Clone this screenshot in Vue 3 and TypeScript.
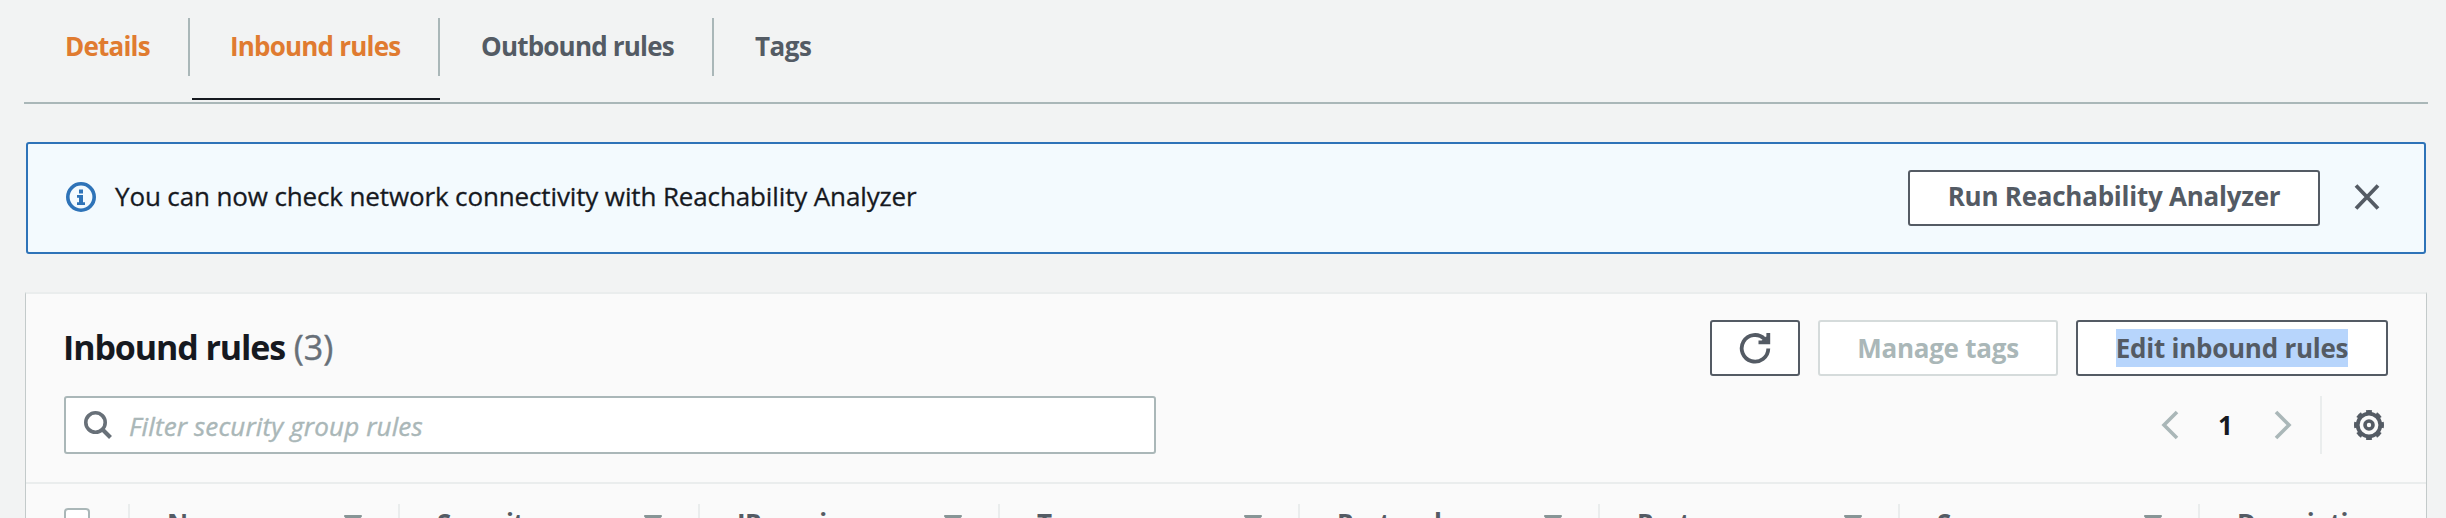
<script setup lang="ts">
import { ref } from 'vue'

interface Tab {
  label: string
  visited: boolean
  kind: string
}

const tabs: Tab[] = [
  { label: 'Details', visited: true, kind: 'tab-details' },
  { label: 'Inbound rules', visited: true, kind: 'tab-inbound' },
  { label: 'Outbound rules', visited: false, kind: 'tab-outbound' },
  { label: 'Tags', visited: false, kind: 'tab-tags' },
]

const activeTab = ref('Inbound rules')
const filter = ref('')
const alertOpen = ref(true)
const columns = ['Name', 'Security group rule ID', 'IP version', 'Type', 'Protocol', 'Port range', 'Source', 'Description - optional']
</script>

<template>
  <main class="page">
    <nav class="tabs">
      <a
        v-for="tab in tabs"
        :key="tab.label"
        class="tab"
        :class="[tab.kind, { visited: tab.visited, active: tab.label === activeTab }]"
        @click="activeTab = tab.label"
      ><span class="tab-label">{{ tab.label }}</span></a>
    </nav>

    <section v-if="alertOpen" class="alert">
      <svg class="info" viewBox="0 0 30 30">
        <circle cx="15" cy="15" r="13.2" fill="none" stroke="#2e73b8" stroke-width="3.6" />
        <path d="M13 7.4h4v4h-4zM11 13h6v7.200h2V23h-8v-2.800h2v-4.400h-2z" fill="#2e73b8" />
      </svg>
      <p class="message">You can now check network connectivity with Reachability Analyzer</p>
      <button class="btn btn-run"><span>Run Reachability Analyzer</span></button>
      <button class="close" aria-label="Close" @click="alertOpen = false">
        <svg width="26" height="26" viewBox="0 0 26 26"><path d="M2 1.500L24 24.500M24 1.500L2 24.500" stroke="#545b64" stroke-width="3.800" /></svg>
      </button>
    </section>

    <section class="panel">
      <header class="panel-head">
        <h2>Inbound rules <span class="count">(3)</span></h2>
        <div class="actions">
          <button class="btn btn-refresh" aria-label="Refresh">
            <svg width="32" height="32" viewBox="0 0 32 32" fill="none" stroke="#545b64" stroke-width="3.800">
              <path d="M29.300 16.500A13.300 13.300 0 1 1 25.500 7" />
              <path d="M29.300 1V10.300H19.500" />
              <path d="M24 10L28.500 5.500" />
            </svg>
          </button>
          <button class="btn btn-tags" disabled><span>Manage tags</span></button>
          <button class="btn btn-edit"><span class="selected">Edit inbound rules</span></button>
        </div>
      </header>

      <div class="tools">
        <label class="search">
          <svg width="28" height="28" viewBox="0 0 28 28" fill="none" stroke="#687078">
            <circle cx="11.500" cy="11.500" r="9.700" stroke-width="3.600" />
            <path d="M18.500 18.500L26.500 26.500" stroke-width="4" />
          </svg>
          <input v-model="filter" placeholder="Filter security group rules" />
        </label>
        <div class="pager">
          <svg width="18" height="30" viewBox="0 0 18 30"><path d="M16 2L3 15L16 28" fill="none" stroke="#aab7b8" stroke-width="3.600" /></svg>
          <b>1</b>
          <svg width="18" height="30" viewBox="0 0 18 30"><path d="M2 2L15 15L2 28" fill="none" stroke="#aab7b8" stroke-width="3.600" /></svg>
        </div>
        <div class="settings">
          <svg width="32" height="32" viewBox="0 0 32 32" fill="none" stroke="#545b64">
            <circle cx="16" cy="16" r="11.300" stroke-width="3.800" />
            <circle cx="16" cy="16" r="13.500" stroke-width="3" pathLength="16" stroke-dasharray="1.100 0.900" stroke-dashoffset="0.550" />
            <circle cx="16" cy="16" r="4" stroke-width="3.600" />
          </svg>
        </div>
      </div>

      <div class="thead">
        <div class="th-check"><span class="checkbox"></span></div>
        <div v-for="(name, i) in columns" :key="name" class="th">
          <span class="th-label">{{ name }}</span>
          <svg v-if="i < columns.length - 1" class="caret" width="18" height="12" viewBox="0 0 18 12"><path d="M1 1h16L9 10z" fill="#879596" stroke="#879596" stroke-width="2" stroke-linejoin="round" /></svg>
        </div>
      </div>
    </section>
  </main>
</template>

<style>
body {
  background: #f2f3f3;
  overflow: hidden;
}
</style>

<style scoped>
.page {
  box-sizing: border-box;
  width: 2446px;
  height: 518px;
  padding: 0 20px 0 24px;
  overflow: hidden;
  background: #f2f3f3;
  color: #16191f;
  font: 26px/38px "Open Sans", "Noto Sans", sans-serif;
}
.page * { box-sizing: border-box; }
.tabs {
  display: flex;
  align-items: flex-start;
  height: 104px;
  width: 2404px;
  padding-top: 18px;
  border-bottom: 2px solid #aab7b8;
}
.tab {
  display: flex;
  height: 82px;
  color: #545b64;
  font-weight: 700;
  letter-spacing: -0.8px;
  white-space: nowrap;
}
.tab-label {
  height: 58px;
  width: 100%;
  padding: 9px 0 0 41px;
  border-right: 2px solid #aab7b8;
}
.tab.visited { color: #e07b30; }
.tab.active { border-bottom: 2px solid #16191f; }
.tab-details { width: 168px; padding-right: 2px; }
.tab-inbound { width: 248px; }
.tab-inbound .tab-label { padding-left: 38px; }
.tab-outbound { width: 274px; }
.tab-tags { width: 150px; letter-spacing: -0.5px; }
.tab-tags .tab-label { border-right: 0; }

.alert {
  display: flex;
  align-items: center;
  width: 2400px;
  height: 112px;
  margin: 38px 0 0 2px;
  padding: 0 44px 0 38px;
  border: 2px solid #2e73b8;
  border-radius: 3px;
  background: #f3fafe;
}
.info { width: 30px; height: 30px; margin-top: -2px; }
.message {
  flex: 1;
  margin: -4px 0 0 19px;
  letter-spacing: -0.13px;
  -webkit-text-stroke: 0.3px currentColor;
  white-space: nowrap;
}
.btn {
  display: flex;
  align-items: center;
  justify-content: center;
  height: 56px;
  padding: 0;
  border: 2px solid #545b64;
  border-radius: 3px;
  background: #fff;
  color: #545b64;
  font: 700 26px/38px "Open Sans", "Noto Sans", sans-serif;
  letter-spacing: -0.25px;
  white-space: nowrap;
}
.btn-run { width: 412px; }
.btn-run span { margin-top: -4px; }
.close {
  display: flex;
  width: 26px;
  margin: -2px 0 0 34px;
  padding: 0;
  border: 0;
  background: none;
}

.panel {
  width: 2402px;
  height: 260px;
  margin: 38px 0 0 1px;
  border: 1px solid #c3caca;
  border-top: 2px solid #eaeded;
  background: #fafafa;
}
.panel-head {
  display: flex;
  justify-content: space-between;
  height: 102px;
  padding: 26px 38px 0;
}
h2 {
  margin: 4px 0 0 -1px;
  font-size: 34px;
  line-height: 46px;
  font-weight: 700;
  letter-spacing: -1.1px;
  white-space: nowrap;
}
.count {
  margin-left: 1px;
  color: #687078;
  font-weight: 400;
  letter-spacing: 0;
  -webkit-text-stroke: 0.4px currentColor;
}
.actions { display: flex; gap: 18px; }
.btn-refresh { width: 90px; }
.btn-tags { width: 240px; border-color: #d5dbdb; color: #aab7b8; }
.btn-edit { width: 312px; }
.selected { height: 38px; background: #b7d5fc; }

.tools { display: flex; height: 58px; padding: 0 38px; }
.search {
  display: flex;
  align-items: center;
  width: 1092px;
  padding-left: 18px;
  border: 2px solid #aab7b8;
  border-radius: 3px;
  background: #fff;
}
input {
  flex: 1;
  height: 50px;
  margin-left: 17px;
  padding: 2px 0 0;
  border: 0;
  outline: 0;
  background: none;
  font: 26px "Open Sans", "Noto Sans", sans-serif;
  letter-spacing: 0.13px;
}
input::placeholder {
  color: #aab7b8;
  font-style: italic;
  opacity: 1;
  -webkit-text-stroke: 0.4px #aab7b8;
}
.pager {
  display: flex;
  align-items: center;
  gap: 39px;
  margin-left: auto;
  margin-right: 28px;
}
.pager b { width: 17px; }
.settings {
  display: flex;
  align-items: center;
  width: 68px;
  padding-left: 31px;
  border-left: 2px solid #eaeded;
}

.thead {
  display: flex;
  height: 60px;
  margin-top: 28px;
  padding-top: 20px;
  border-top: 2px solid #eaeded;
  color: #545b64;
  font-weight: 700;
  letter-spacing: -0.6px;
}
.th-check { flex: 0 0 104px; border-right: 2px solid #eaeded; padding: 4px 0 0 38px; }
.checkbox {
  display: block;
  width: 26px;
  height: 26px;
  border: 2px solid #aab7b8;
  border-radius: 4px;
  background: #fff;
}
.th {
  display: flex;
  flex: 0 0 300px;
  min-width: 0;
  justify-content: space-between;
  gap: 12px;
  padding: 0 36px 0 37px;
  border-right: 2px solid #eaeded;
  white-space: nowrap;
}
.th:nth-child(2) { flex-basis: 270px; }
.th:last-child { flex-basis: 226px; border-right: 0; padding-right: 0; }
.th-label { min-width: 0; overflow: hidden; text-overflow: ellipsis; }
.th:last-child .th-label { text-overflow: clip; }
.caret { flex: none; margin-top: 11px; }
</style>
